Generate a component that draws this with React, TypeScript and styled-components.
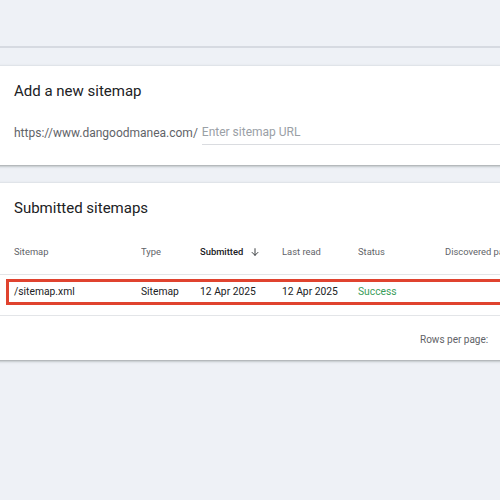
import styled, { createGlobalStyle } from 'styled-components';

const GlobalStyle = createGlobalStyle`
  html, body {
    margin: 0;
    padding: 0;
    background: #eef1f6;
    font-family: Roboto, 'Liberation Sans', sans-serif;
    overflow: hidden;
  }
`;

const columns = '127px 59px 82px 76px 87px 1fr';

const App = () => {
  return (
    <Page>
      <GlobalStyle />
      <TopBar />
      <Content>
        <Card>
          <CardTitle>Add a new sitemap</CardTitle>
          <UrlRow>
            <UrlPrefix>https://www.dangoodmanea.com/</UrlPrefix>
            <UrlInput placeholder="Enter sitemap URL" />
          </UrlRow>
        </Card>

        <Card $height={177}>
          <CardTitle $top={15}>Submitted sitemaps</CardTitle>
          <HeaderRow>
            <HeadCell>Sitemap</HeadCell>
            <HeadCell>Type</HeadCell>
            <HeadCell $active>
              Submitted
              <svg width="10" height="10" viewBox="0 0 24 24" fill="none" stroke="#3c4043" strokeWidth="2.4" strokeLinecap="round" strokeLinejoin="round">
                <path d="M12 4v16" />
                <path d="M5 13l7 7 7-7" />
              </svg>
            </HeadCell>
            <HeadCell>Last read</HeadCell>
            <HeadCell>Status</HeadCell>
            <HeadCell>Discovered pages</HeadCell>
          </HeaderRow>
          <DataRow>
            <Cell>/sitemap.xml</Cell>
            <Cell>Sitemap</Cell>
            <Cell>12 Apr 2025</Cell>
            <Cell>12 Apr 2025</Cell>
            <Cell $status>Success</Cell>
            <Cell></Cell>
            <Highlight />
          </DataRow>
          <Footer>Rows per page:</Footer>
        </Card>
      </Content>
    </Page>
  );
};

const Page = styled.div`
  width: 500px;
  height: 500px;
  background: #eef1f6;
  overflow: hidden;
`;

const TopBar = styled.div`
  height: 46px;
  border-bottom: 2px solid #d6dae1;
  background: #eef1f6;
`;

const Content = styled.div`
  display: flex;
  flex-direction: column;
  gap: 18px;
  padding-top: 18px;
`;

const Card = styled.div<{ $height?: number }>`
  background: #fff;
  height: ${p => p.$height ?? 99}px;
  margin: 0 -4px;
  padding: 0 4px;
  box-shadow: 0 1px 2px rgba(60, 64, 67, 0.35), 0 1px 3px 1px rgba(60, 64, 67, 0.12);
  display: flex;
  flex-direction: column;
`;

const CardTitle = styled.div<{ $top?: number }>`
  padding: ${p => p.$top ?? 15}px 14px 0;
  font-size: 15px;
  line-height: 20px;
  color: #202124;
`;

const UrlRow = styled.div`
  display: flex;
  align-items: flex-end;
  padding: 23px 0 0 14px;
`;

const UrlPrefix = styled.span`
  font-size: 12px;
  color: #5f6368;
  line-height: 16px;
  padding-bottom: 4px;
  margin-right: 4px;
`;

const UrlInput = styled.input`
  flex: 1;
  border: none;
  border-bottom: 1px solid #dadce0;
  outline: none;
  font-family: Roboto, 'Liberation Sans', sans-serif;
  font-size: 12px;
  line-height: 16px;
  padding: 0 0 4px;
  color: #202124;
  background: transparent;

  &::placeholder {
    color: #9aa0a6;
  }
`;

const HeaderRow = styled.div`
  display: grid;
  grid-template-columns: ${columns};
  align-items: center;
  padding-left: 14px;
  margin-top: 11px;
  height: 45px;
  border-bottom: 1px solid #e3e5e8;
`;

const HeadCell = styled.div<{ $active?: boolean }>`
  display: flex;
  align-items: center;
  gap: 7px;
  font-size: 9.4px;
  white-space: nowrap;
  overflow: hidden;
  color: ${p => (p.$active ? '#202124' : '#5f6368')};
  font-weight: ${p => (p.$active ? 500 : 400)};
`;

const DataRow = styled.div`
  position: relative;
  display: grid;
  grid-template-columns: ${columns};
  align-items: start;
  padding: 10px 0 0 14px;
  height: 41px;
  box-sizing: border-box;
  border-bottom: 1px solid #e3e5e8;
`;

const Cell = styled.div<{ $status?: boolean }>`
  font-size: 10.3px;
  line-height: 13px;
  white-space: nowrap;
  color: ${p => (p.$status ? '#3a9d5a' : '#202124')};
`;

const Highlight = styled.div`
  position: absolute;
  left: 6px;
  right: -30px;
  top: 4px;
  height: 26px;
  border: 3px solid #e0432f;
  box-sizing: border-box;
`;

const Footer = styled.div`
  display: flex;
  justify-content: flex-start;
  padding: 18px 0 0 420px;
  font-size: 10px;
  line-height: 12px;
  color: #5f6368;
`;

export default App;
